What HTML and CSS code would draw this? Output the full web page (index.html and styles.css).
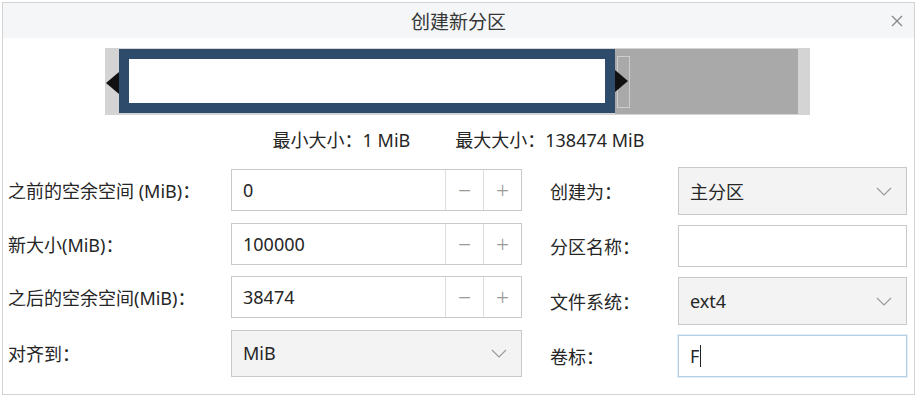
FILE: index.html
```html
<!DOCTYPE html>
<html lang="zh-CN">
<head>
    <meta charset="UTF-8">
    <title>创建新分区</title>
    <link rel="stylesheet" href="styles.css">
</head>
<body>
    <div class="window">
        <div class="titlebar">
            <span class="title">创建新分区</span>
            <span class="close">
                <svg width="14" height="14" viewBox="0 0 14 14"><path d="M2 2 L12 12 M12 2 L2 12" stroke="#8a8a8a" stroke-width="1.4" fill="none"/></svg>
            </span>
        </div>

        <div class="bar">
            <div class="band-edge left"></div>
            <div class="frame"></div>
            <div class="free"></div>
            <div class="band-edge right"></div>
            <div class="handle"></div>
            <div class="arrow arrow-left"></div>
            <div class="arrow arrow-right"></div>
        </div>

        <div class="limits">
            <span>最小大小：1 MiB</span>
            <span>最大大小：138474 MiB</span>
        </div>

        <div class="form">
            <div class="col col-left">
                <label>之前的空余空间 (MiB)：</label>
                <div class="spin">
                    <div class="spin-value">0</div>
                    <div class="spin-btn">−</div>
                    <div class="spin-btn">+</div>
                </div>

                <label>新大小(MiB)：</label>
                <div class="spin">
                    <div class="spin-value">100000</div>
                    <div class="spin-btn">−</div>
                    <div class="spin-btn">+</div>
                </div>

                <label>之后的空余空间(MiB)：</label>
                <div class="spin">
                    <div class="spin-value">38474</div>
                    <div class="spin-btn">−</div>
                    <div class="spin-btn">+</div>
                </div>

                <label>对齐到：</label>
                <div class="combo combo-tall">
                    <span>MiB</span>
                    <svg class="chevron" width="16" height="9" viewBox="0 0 16 9"><path d="M1 1 L8 8 L15 1" stroke="#9a9a9a" stroke-width="1.2" fill="none"/></svg>
                </div>
            </div>

            <div class="col col-right">
                <label>创建为：</label>
                <div class="combo">
                    <span>主分区</span>
                    <svg class="chevron" width="16" height="9" viewBox="0 0 16 9"><path d="M1 1 L8 8 L15 1" stroke="#9a9a9a" stroke-width="1.2" fill="none"/></svg>
                </div>

                <label>分区名称：</label>
                <div class="field"></div>

                <label>文件系统：</label>
                <div class="combo">
                    <span>ext4</span>
                    <svg class="chevron" width="16" height="9" viewBox="0 0 16 9"><path d="M1 1 L8 8 L15 1" stroke="#9a9a9a" stroke-width="1.2" fill="none"/></svg>
                </div>

                <label>卷标：</label>
                <div class="field focused">F<span class="caret"></span></div>
            </div>
        </div>
    </div>
</body>
</html>
```

FILE: styles.css
```css
body {
    margin: 0;
    background: #fff;
    font-family: "Noto Sans", "Noto Sans CJK SC", sans-serif;
    font-size: 18px;
    color: #262626;
}

.window {
    box-sizing: border-box;
    width: 913px;
    height: 393px;
    margin: 2px 0 0 2px;
    border: 1px solid #d3d3d3;
    background: #fff;
}

.titlebar {
    position: relative;
    height: 35px;
    background: #f4f6f8;
    display: flex;
    align-items: center;
    justify-content: center;
}

.title {
    font-size: 19px;
    color: #363636;
}

.close {
    position: absolute;
    right: 10px;
    top: 6px;
}

/* partition bar */
.bar {
    position: relative;
    display: flex;
    width: 705px;
    height: 67px;
    margin: 10px 0 0 102px;
    background: #d4d4d4;
}

.band-edge.left {
    width: 14px;
}

.band-edge.right {
    width: 12px;
}

.frame {
    box-sizing: border-box;
    width: 496px;
    margin: 1px 0 2px;
    border: 10px solid #2f4b6b;
    background: #fff;
}

.free {
    flex: 1;
    margin: 1px 0 1px;
    background: #a9a9a9;
}

.handle {
    position: absolute;
    left: 512px;
    top: 8px;
    width: 11px;
    height: 50px;
    border: 1px solid #cdcdcd;
}

.arrow {
    position: absolute;
    width: 0;
    height: 0;
    border-top: 11px solid transparent;
    border-bottom: 11px solid transparent;
}

.arrow-left {
    left: 1px;
    top: 24px;
    border-right: 13px solid #111;
}

.arrow-right {
    left: 510px;
    top: 22px;
    border-left: 13px solid #111;
}

.limits {
    display: flex;
    justify-content: center;
    gap: 45px;
    margin-top: 14px;
    line-height: 22px;
}

/* form */
.form {
    display: flex;
    margin-top: 16px;
}

.col {
    display: grid;
    align-items: center;
}

.col-left {
    grid-template-columns: 223px 291px;
    row-gap: 11px;
    margin: 2px 0 0 5px;
}

.col-right {
    grid-template-columns: 128px 229px;
    row-gap: 10px;
    margin-left: 28px;
}

label {
    white-space: nowrap;
}

.spin {
    box-sizing: border-box;
    display: flex;
    height: 42px;
    border: 1px solid #c9c9c9;
    background: #fff;
}

.spin-value {
    flex: 1;
    display: flex;
    align-items: center;
    padding-left: 11px;
}

.spin-btn {
    width: 37px;
    display: flex;
    align-items: center;
    justify-content: center;
    border-left: 1px solid #dedede;
    color: #9a9a9a;
    font-size: 23px;
    font-weight: 300;
}

.combo {
    box-sizing: border-box;
    display: flex;
    align-items: center;
    justify-content: space-between;
    height: 48px;
    padding: 0 14px 0 11px;
    border: 1px solid #c9c9c9;
    background: #f3f3f3;
}

.combo-tall {
    height: 47px;
}

.field {
    box-sizing: border-box;
    display: flex;
    align-items: center;
    height: 42px;
    padding-left: 11px;
    border: 1px solid #c9c9c9;
    background: #fff;
}

.field.focused {
    border-color: #b3cde2;
    box-shadow: 0 0 0 1px #e3eef6;
}

.caret {
    display: inline-block;
    width: 1px;
    height: 22px;
    margin-left: 1px;
    background: #222;
}
```
